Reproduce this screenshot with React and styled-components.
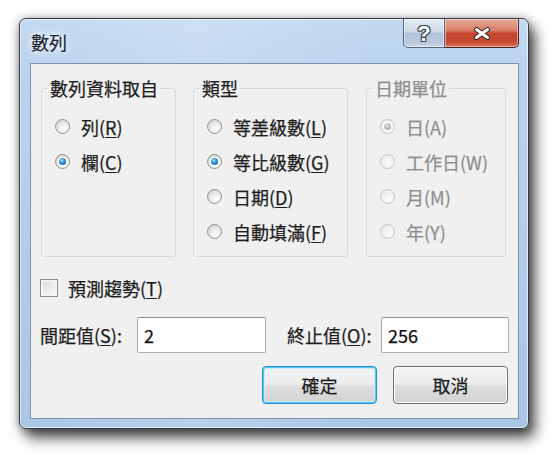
import React from 'react';
import styled, { createGlobalStyle } from 'styled-components';

const GlobalStyle = createGlobalStyle`
  html, body {
    margin: 0;
    padding: 0;
    background: #ffffff;
  }
  body {
    font-family: "Noto Sans CJK TC", "Noto Sans", sans-serif;
  }
`;

const Page = styled.div`
  width: 560px;
  height: 461px;
  padding: 18px 0 0 19px;
  box-sizing: border-box;
`;

const Window = styled.div`
  width: 510px;
  height: 411px;
  box-sizing: border-box;
  border: 1px solid #333c48;
  border-radius: 7px;
  background:
    linear-gradient(90deg, rgba(255,255,255,0) 0%, rgba(255,255,255,0.18) 35%, rgba(255,255,255,0) 70%),
    linear-gradient(180deg, #c3d9f1 0%, #bad2ee 14%, #aac6e6 100%);
  box-shadow:
    inset 0 0 0 1px rgba(255, 255, 255, 0.6),
    6px 9px 14px rgba(0, 0, 0, 0.68),
    0 1px 10px rgba(0, 0, 0, 0.4);
  display: flex;
  flex-direction: column;
  overflow: hidden;
`;

const TitleBar = styled.div`
  height: 44px;
  flex: none;
  display: flex;
  justify-content: space-between;
  align-items: flex-start;
  padding: 0 9px 0 11px;
`;

const Title = styled.div`
  margin-top: 11px;
  font-size: 18px;
  line-height: 24px;
  color: #1c2532;
  -webkit-text-stroke: 0.2px #1c2532;
  text-shadow: 0 0 6px #ffffff, 0 0 10px rgba(255, 255, 255, 0.9);
`;

const Caption = styled.div`
  display: flex;
  height: 29px;
`;

const CapButton = styled.div`
  width: ${p => p.$w}px;
  height: 29px;
  box-sizing: border-box;
  border: 1px solid ${p => (p.$close ? '#4b2620' : '#56677b')};
  border-top: none;
  border-left-width: ${p => (p.$close ? 0 : 1)}px;
  border-radius: ${p => (p.$close ? '0 0 5px 0' : '0 0 0 5px')};
  background: ${p =>
    p.$close
      ? 'linear-gradient(180deg, #e9a897 0%, #d9806d 40%, #c6452c 52%, #c84a31 80%, #d9735a 100%)'
      : 'linear-gradient(180deg, #e4ecf5 0%, #cdd9e6 45%, #b3c4d7 52%, #b9cadc 85%, #cddbea 100%)'};
  box-shadow: inset 0 0 0 1px rgba(255, 255, 255, 0.45);
  display: flex;
  align-items: center;
  justify-content: center;
`;

const HelpGlyph = styled.span`
  font-family: "Liberation Sans", Arial, sans-serif;
  font-weight: 700;
  font-size: 22px;
  line-height: 22px;
  color: #ffffff;
  text-shadow:
    1px 0 0 #3c4654, -1px 0 0 #3c4654, 0 1px 0 #3c4654, 0 -1px 0 #3c4654,
    1px 1px 0 #3c4654, -1px -1px 0 #3c4654, 1px -1px 0 #3c4654, -1px 1px 0 #3c4654;
  margin-top: 1px;
`;

const Client = styled.div`
  flex: 1;
  margin: 0 9px 9px 10px;
  border: 1px solid #7d92aa;
  background: #f0f0f0;
  display: flex;
  flex-direction: column;
  padding: 14px 9px 0 9px;
  color: #1e1e1e;
  font-size: 18px;
  -webkit-text-stroke: 0.25px currentColor;
`;

const Groups = styled.div`
  display: flex;
  margin-left: 1px;
`;

const Group = styled.fieldset`
  width: ${p => p.$w}px;
  margin: 0 0 0 ${p => p.$gap || 0}px;
  box-sizing: border-box;
  border: 1px solid #d3dde4;
  border-radius: 3px;
  padding: 11px 6px 7px 13px;
  min-width: 0;
  color: ${p => (p.$disabled ? '#8e8e8e' : '#1e1e1e')};
`;

const Legend = styled.legend`
  margin-left: -7px;
  padding: 0 2px;
  font-size: 18px;
  line-height: 20px;
  white-space: nowrap;
`;

const Row = styled.div`
  height: 35px;
  display: flex;
  align-items: center;
  gap: 11px;
  white-space: nowrap;
  line-height: 20px;
`;

const Radio = styled.span`
  width: 15px;
  height: 15px;
  flex: none;
  box-sizing: border-box;
  border-radius: 50%;
  border: 1px solid ${p => (p.$disabled ? '#c6c6c6' : '#8f9090')};
  background: ${p =>
    p.$disabled
      ? 'radial-gradient(circle at 65% 70%, #fbfbfb 0%, #eeeeee 60%, #e2e2e2 100%)'
      : 'radial-gradient(circle at 65% 70%, #ffffff 0%, #ebebeb 45%, #c8c8c8 100%)'};
  display: flex;
  align-items: center;
  justify-content: center;

  &::after {
    content: '';
    display: ${p => (p.$checked ? 'block' : 'none')};
    width: 7px;
    height: 7px;
    border-radius: 50%;
    box-shadow: 0 0 0 1px #ffffff;
    background: ${p =>
      p.$disabled
        ? 'radial-gradient(circle at 40% 35%, #e0e0e0 0%, #b4b4b4 60%, #9a9a9a 100%)'
        : 'radial-gradient(circle at 40% 35%, #9be2ff 0%, #2d8fd8 45%, #0b3d78 100%)'};
  }
`;

const Mn = styled.u`
  text-decoration: underline;
  text-underline-offset: 2px;
  text-decoration-thickness: 1px;
`;

const CheckRow = styled.div`
  margin-top: 21px;
  height: 20px;
  display: flex;
  align-items: center;
  gap: 10px;
  line-height: 20px;
`;

const CheckBox = styled.span`
  width: 18px;
  height: 18px;
  box-sizing: border-box;
  border: 1px solid #8f8f8f;
  background: linear-gradient(135deg, #d6d6d6 0%, #ececec 50%, #fdfdfd 100%);
  box-shadow: inset 0 0 0 2px #f4f4f4;
`;

const FieldRow = styled.div`
  margin-top: 19px;
  height: 36px;
  display: flex;
  align-items: center;
`;

const FieldLabel = styled.label`
  width: ${p => p.$w}px;
  margin-left: ${p => p.$ml || 0}px;
  white-space: nowrap;
  line-height: 20px;
`;

const Input = styled.input`
  width: ${p => p.$w}px;
  height: 36px;
  box-sizing: border-box;
  border: 1px solid #abadb3;
  border-top-color: #8e9097;
  border-radius: 2px;
  background: #ffffff;
  padding: 0 6px;
  font-family: "Noto Sans CJK TC", "Noto Sans", sans-serif;
  font-size: 18px;
  color: #111111;
  -webkit-text-stroke: 0.25px #111111;
  outline: none;
`;

const ButtonRow = styled.div`
  margin-top: 13px;
  display: flex;
  justify-content: flex-end;
  gap: 16px;
  padding-right: 1px;
`;

const Button = styled.button`
  width: 115px;
  height: 38px;
  box-sizing: border-box;
  border: 1px solid ${p => (p.$default ? '#2b8fd0' : '#707070')};
  border-radius: 4px;
  background: linear-gradient(180deg, #f4f4f4 0%, #ececec 48%, #dedede 52%, #d2d2d2 100%);
  box-shadow: ${p =>
    p.$default
      ? 'inset 0 0 0 1px #56c6f5, inset 0 0 0 2px #c9ecfb'
      : 'inset 0 0 0 1px #fbfbfb'};
  font-family: "Noto Sans CJK TC", "Noto Sans", sans-serif;
  font-size: 18px;
  color: #1e1e1e;
  -webkit-text-stroke: 0.25px #1e1e1e;
  padding: 0;
`;

const CloseIcon = () => (
  <svg width="18" height="13" viewBox="0 0 18 13">
    <path d="M3.5 2.5 L14.5 10.5 M14.5 2.5 L3.5 10.5" stroke="#3a2420" strokeWidth="5" strokeLinecap="round" />
    <path d="M3.5 2.5 L14.5 10.5 M14.5 2.5 L3.5 10.5" stroke="#ffffff" strokeWidth="3" strokeLinecap="round" />
  </svg>
);

const RadioOption = ({ checked, disabled, children }) => (
  <Row>
    <Radio $checked={checked} $disabled={disabled} />
    <span>{children}</span>
  </Row>
);

export default function App() {
  return (
    <>
      <GlobalStyle />
      <Page>
        <Window>
          <TitleBar>
            <Title>數列</Title>
            <Caption>
              <CapButton $w={42}>
                <HelpGlyph>?</HelpGlyph>
              </CapButton>
              <CapButton $w={74} $close>
                <CloseIcon />
              </CapButton>
            </Caption>
          </TitleBar>
          <Client>
            <Groups>
              <Group $w={135}>
                <Legend>數列資料取自</Legend>
                <RadioOption>列(<Mn>R</Mn>)</RadioOption>
                <RadioOption checked>欄(<Mn>C</Mn>)</RadioOption>
              </Group>
              <Group $w={155} $gap={17}>
                <Legend>類型</Legend>
                <RadioOption>等差級數(<Mn>L</Mn>)</RadioOption>
                <RadioOption checked>等比級數(<Mn>G</Mn>)</RadioOption>
                <RadioOption>日期(<Mn>D</Mn>)</RadioOption>
                <RadioOption>自動填滿(<Mn>F</Mn>)</RadioOption>
              </Group>
              <Group $w={140} $gap={18} $disabled>
                <Legend>日期單位</Legend>
                <RadioOption checked disabled>日(A)</RadioOption>
                <RadioOption disabled>工作日(W)</RadioOption>
                <RadioOption disabled>月(M)</RadioOption>
                <RadioOption disabled>年(Y)</RadioOption>
              </Group>
            </Groups>
            <CheckRow>
              <CheckBox />
              <span>預測趨勢(<Mn>T</Mn>)</span>
            </CheckRow>
            <FieldRow>
              <FieldLabel $w={97}>間距值(<Mn>S</Mn>):</FieldLabel>
              <Input $w={129} value="2" readOnly />
              <FieldLabel $w={94} $ml={21}>終止值(<Mn>O</Mn>):</FieldLabel>
              <Input $w={128} value="256" readOnly />
            </FieldRow>
            <ButtonRow>
              <Button $default>確定</Button>
              <Button>取消</Button>
            </ButtonRow>
          </Client>
        </Window>
      </Page>
    </>
  );
}
